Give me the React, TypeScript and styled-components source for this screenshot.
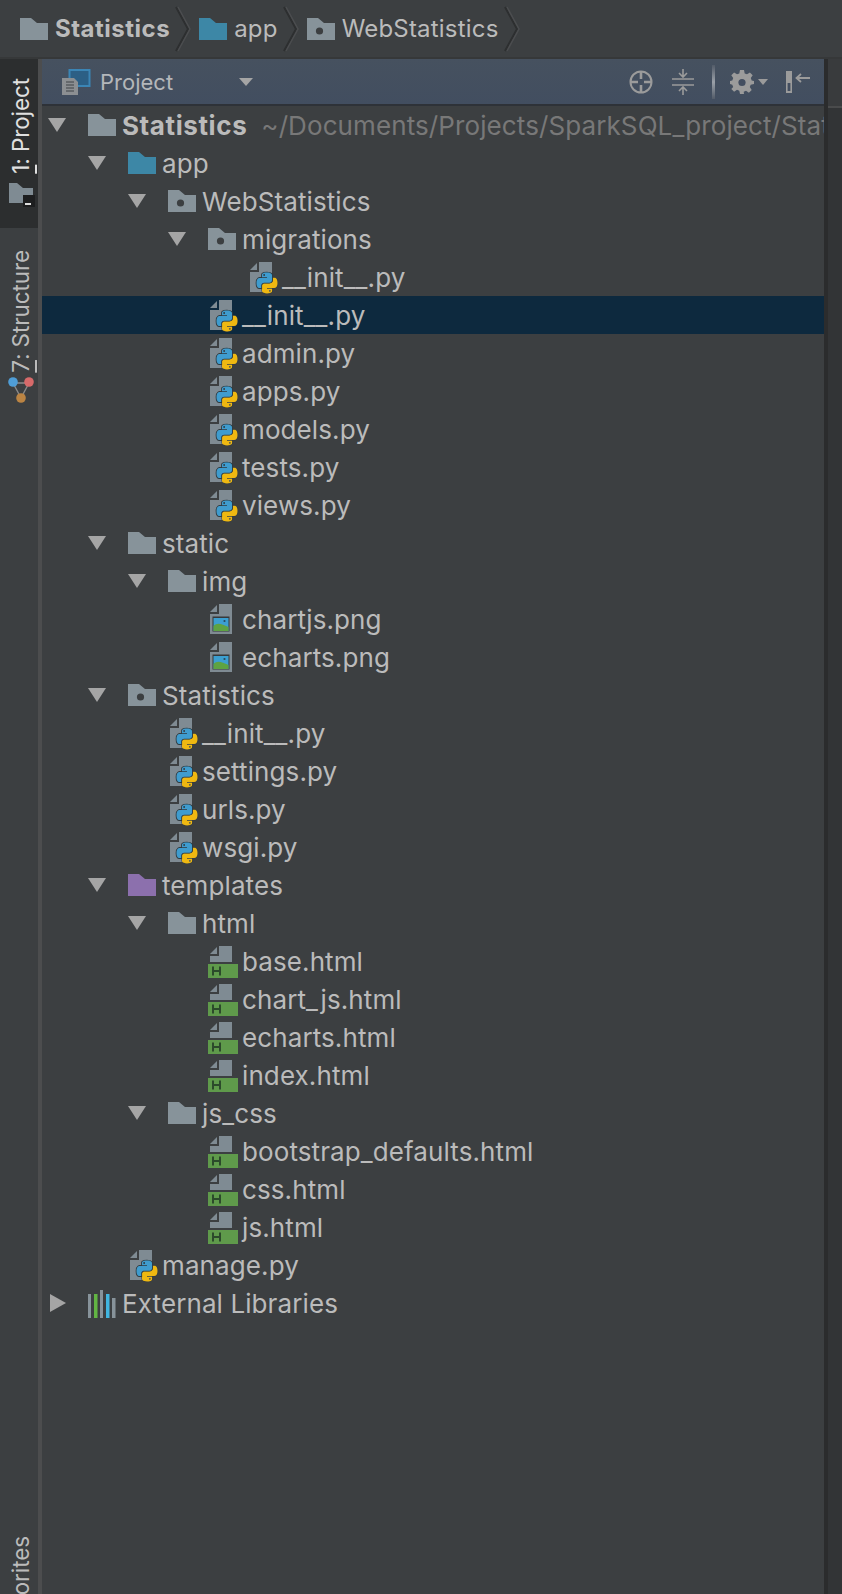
import React from 'react';
import styled, { createGlobalStyle } from 'styled-components';

const uiFont = `Inter, "Liberation Sans", sans-serif`;

const GlobalStyle = createGlobalStyle`
    html, body {
        margin: 0;
        padding: 0;
        background: #3c3f41;
    }
    * {
        box-sizing: border-box;
    }
`;

const Page = styled.div`
    width: 842px;
    height: 1594px;
    overflow: hidden;
    background: #3c3f41;
    color: #bbbbbb;
    font-family: ${uiFont};
    display: flex;
    flex-direction: column;
`;

/* ---------- breadcrumb bar ---------- */

const Breadcrumbs = styled.div`
    height: 59px;
    flex: none;
    display: flex;
    align-items: center;
    padding-left: 20px;
    background: #3c3f41;
    border-bottom: 2px solid #363839;
`;

const Crumb = styled.div`
    display: flex;
    align-items: center;
    gap: 7px;
    margin-right: 3px;
`;

const CrumbText = styled.span<{ $bold?: boolean }>`
    font-size: 24px;
    letter-spacing: ${p => (p.$bold ? '0.5px' : '0.2px')};
    font-weight: ${p => (p.$bold ? 700 : 400)};
    line-height: 58px;
`;

const ChevronSvg = styled.svg`
    display: block;
    margin-left: 2px;
    margin-right: 8px;
`;

/* ---------- main area ---------- */

const Body = styled.div`
    flex: 1;
    display: flex;
    min-height: 0;
`;

const ToolStrip = styled.div`
    width: 42px;
    flex: none;
    display: flex;
    flex-direction: column;
    overflow: hidden;
    border-right: 4px solid #4c4d4e;
`;

const ToolTab = styled.div<{ $active?: boolean }>`
    display: flex;
    flex-direction: column;
    align-items: center;
    padding-left: 4px;
    background: ${p => (p.$active ? '#2c2e2f' : 'transparent')};
    color: ${p => (p.$active ? '#e0e0e0' : '#bbbbbb')};
    height: ${p => (p.$active ? '169px' : 'auto')};
    padding-top: ${p => (p.$active ? '19px' : '22px')};
`;

const FavoritesTab = styled(ToolTab)`
    margin-top: auto;
    margin-bottom: -38px;
    padding-top: 0;
`;

const ToolLabel = styled.span`
    writing-mode: vertical-rl;
    transform: rotate(180deg);
    font-size: 22.5px;
    line-height: 34px;
    white-space: nowrap;
    letter-spacing: -0.1px;

    u {
        text-underline-offset: 3px;
    }
`;

const ToolIcon = styled.svg<{ $gap: number }>`
    display: block;
    overflow: visible;
    margin-top: ${p => p.$gap}px;
`;

const Panel = styled.div`
    flex: 1;
    min-width: 0;
    display: flex;
    flex-direction: column;
`;

const PanelHeader = styled.div`
    height: 47px;
    flex: none;
    display: flex;
    align-items: center;
    padding-left: 20px;
    background: linear-gradient(#46515f, #424e60);
    border-bottom: 2px solid #2e3238;
`;

const PanelTitle = styled.span`
    font-size: 22px;
    letter-spacing: 0;
    color: #b4b7ba;
    margin-left: 8px;
    width: 139px;
`;

const HeaderTools = styled.div`
    margin-left: auto;
    display: flex;
    align-items: center;
    padding-right: 14px;
`;

const HeaderIcon = styled.svg<{ $gap?: number }>`
    display: block;
    margin-left: ${p => p.$gap ?? 0}px;
`;

const HeaderRule = styled.div`
    width: 3px;
    height: 34px;
    margin-left: 18px;
    background: linear-gradient(#525b68, #9aa0a8 50%, #525b68);
`;

const Gutter = styled.div`
    width: 18px;
    flex: none;
    background: #323436;
    border-left: 4px solid #2b2c2d;
`;

const GutterHead = styled.div`
    height: 49px;
    background: #393b3d;
    border-bottom: 2px solid #4a4b4c;
`;

/* ---------- tree ---------- */

const Tree = styled.div`
    flex: 1;
    overflow: hidden;
`;

const Row = styled.div<{ $level: number; $selected?: boolean }>`
    height: 38px;
    display: flex;
    align-items: center;
    white-space: nowrap;
    overflow: hidden;
    padding-left: ${p => 6 + p.$level * 40}px;
    background: ${p => (p.$selected ? '#0d293e' : 'transparent')};
`;

const ArrowSlot = styled.div`
    width: 40px;
    flex: none;
    display: flex;
    align-items: center;
`;

const IconSlot = styled.div`
    width: 34px;
    flex: none;
    height: 38px;
    display: flex;
    align-items: flex-start;
`;

const RowLabel = styled.span<{ $bold?: boolean }>`
    font-size: 26px;
    letter-spacing: ${p => (p.$bold ? '0.6px' : '0.1px')};
    font-weight: ${p => (p.$bold ? 700 : 400)};
`;

const RowPath = styled.span`
    font-size: 26px;
    letter-spacing: 0.1px;
    color: #787878;
    margin-left: 14px;
`;

/* ---------- icons ---------- */

type FolderKind = 'plain' | 'source' | 'package' | 'template';

const folderColor: Record<FolderKind, string> = {
    plain: '#87939a',
    package: '#87939a',
    source: '#3d87a6',
    template: '#8c70ad'
};

const FolderSvg = styled.svg<{ $top: number }>`
    display: block;
    margin-top: ${p => p.$top}px;
`;

const FolderIcon = ({ kind, top = 8 }: { kind: FolderKind; top?: number }) => (
    <FolderSvg $top={top} width="28" height="22" viewBox="0 0 28 22">
        <path d="M0 0h11l6 5h11v17H0z" fill={folderColor[kind]} />
        {kind === 'package' && <circle cx="12.5" cy="13" r="3.6" fill="#3c3f41" />}
    </FolderSvg>
);

const PythonMark = () => (
    <g transform="translate(6.5 10.5) scale(0.19)">
        <path
            d="M55.7 110c28 0 26.3-12.2 26.3-12.2l0-12.6H55.3v-3.8h37.3S110.6 83.5 110.6 55.2c0-28.2-15.6-27.2-15.6-27.2h-9.3v13.1s.5 15.6-15.4 15.6H43.8s-14.9-.2-14.9 14.4v24.2S26.7 110 55.7 110zM70.4 101.5a4.8 4.8 0 1 1 0-9.6 4.8 4.8 0 0 1 0 9.6z"
            fill="#efb811"
            stroke="#2f3a40"
            strokeWidth="5"
            paintOrder="stroke"
        />
        <path
            d="M54.9 0C26.9 0 28.6 12.2 28.6 12.2l0 12.6h26.7v3.8H18S0 26.5 0 54.8c0 28.2 15.6 27.2 15.6 27.2h9.3V68.9s-.5-15.6 15.4-15.6h26.5s14.9.2 14.9-14.4V14.7S83.9 0 54.9 0zM40.2 8.5a4.8 4.8 0 1 1 0 9.6 4.8 4.8 0 0 1 0-9.6z"
            fill="#3f9cce"
            stroke="#2f3a40"
            strokeWidth="9"
            paintOrder="stroke"
        />
    </g>
);

const FileSvg = styled.svg`
    display: block;
    overflow: visible;
    margin-top: 4px;
    margin-left: 2px;
`;

const PythonIcon = () => (
    <FileSvg width="30" height="33" viewBox="0 0 30 33">
        <path d="M0 8 7 1v7z" fill="#7f8b93" />
        <path d="M9 0h13v30H0V10h9z" fill="#7f8b93" />
        <PythonMark />
    </FileSvg>
);

const ImageIcon = () => (
    <FileSvg width="22" height="30" viewBox="0 0 22 30">
        <path d="M0 8 7 1v7z" fill="#7f8b93" />
        <path d="M9 0h13v30H0V10h9z" fill="#7f8b93" />
        <rect x="2.5" y="12.5" width="17" height="15" fill="#37393b" />
        <rect x="3.5" y="14" width="15" height="13" fill="#3c9fd0" />
        <path d="M3.5 22c4-4 8-2 15 1v4h-15z" fill="#5ea342" />
        <circle cx="14.5" cy="17" r="1.1" fill="#27495c" />
    </FileSvg>
);

const HtmlFileSvg = styled.svg`
    display: block;
    margin-top: 4px;
`;

const HtmlIcon = () => (
    <HtmlFileSvg width="30" height="32" viewBox="0 0 30 32">
        <path d="M2 8 9 1v7z" fill="#7f8b93" />
        <path d="M11 0h13v16H2v-6h9z" fill="#7f8b93" />
        <rect x="0" y="18" width="30" height="14" fill="#5f9a4b" />
        <path d="M5 20.5v9M12 20.5v9M5 25h7" stroke="#2c4a2b" strokeWidth="2" fill="none" />
    </HtmlFileSvg>
);

const LibrariesIcon = () => (
    <FolderSvg $top={6} width="28" height="28" viewBox="0 0 28 28">
        <rect x="0" y="4" width="3" height="24" fill="#87939a" />
        <rect x="6" y="4" width="3.5" height="24" fill="#62b543" />
        <rect x="12" y="0" width="3" height="28" fill="#87939a" />
        <rect x="18" y="4" width="3.5" height="24" fill="#40b6e0" />
        <rect x="24" y="8" width="3.5" height="20" fill="#87939a" />
    </FolderSvg>
);

const ClosedArrow = styled.svg`
    display: block;
    margin-left: 2px;
`;

const OpenArrow = styled.svg`
    display: block;
`;

const Arrow = ({ open }: { open: boolean }) =>
    open ? (
        <OpenArrow width="18" height="14" viewBox="0 0 18 14">
            <path d="M0 0h18L9 14z" fill="#a5a5a5" />
        </OpenArrow>
    ) : (
        <ClosedArrow width="16" height="18" viewBox="0 0 16 18">
            <path d="M0 0l16 9-16 9z" fill="#a5a5a5" />
        </ClosedArrow>
    );

const Chevron = () => (
    <ChevronSvg width="16" height="46" viewBox="0 0 16 46">
        <path d="M1 1l12 22L1 45" fill="none" stroke="#2d2f30" strokeWidth="2" />
        <path d="M3 1l12 22L3 45" fill="none" stroke="#4b4d4f" strokeWidth="1.5" />
    </ChevronSvg>
);

const ProjectViewSvg = styled.svg`
    display: block;
`;

const ProjectViewIcon = () => (
    <ProjectViewSvg width="30" height="26" viewBox="0 0 30 26">
        <rect x="7.5" y="1" width="20" height="16" fill="#2c5f85" stroke="#3b85b5" strokeWidth="2" />
        <path d="M0 9h12l4 4v13H0z" fill="#8c8f92" />
        <path d="M4 13h8M4 16h8M4 19h8M4 22h8" stroke="#3e4246" strokeWidth="1" />
    </ProjectViewSvg>
);

const LocateIcon = () => (
    <HeaderIcon width="24" height="24" viewBox="0 0 24 24">
        <circle cx="12" cy="12" r="10.5" fill="none" stroke="#9b9b9b" strokeWidth="2" />
        <path d="M12 2v7M12 15v7M2 12h7M15 12h7" stroke="#9b9b9b" strokeWidth="2.6" />
    </HeaderIcon>
);

const CollapseIcon = () => (
    <HeaderIcon $gap={19} width="22" height="28" viewBox="0 0 22 28">
        <path d="M0 11h22M0 17h22" stroke="#9b9b9b" strokeWidth="1.6" />
        <path d="M11 1v7M7 5l4 4 4-4" fill="none" stroke="#9b9b9b" strokeWidth="1.6" />
        <path d="M11 27v-7M7 23l4-4 4 4" fill="none" stroke="#9b9b9b" strokeWidth="1.6" />
    </HeaderIcon>
);

const GearIcon = () => (
    <HeaderIcon $gap={15} width="24" height="24" viewBox="0 0 24 24">
        <path
            d="M10 0h4l.7 3.4 2.3.9 2.9-1.9 2.8 2.8-1.9 2.9.9 2.3L24 11v3l-3.3.8-.9 2.2 1.9 2.9-2.8 2.8-2.9-1.9-2.3.9L14 24h-4l-.7-3.3-2.3-.9-2.9 1.9-2.8-2.8L3.2 17l-.9-2.2L0 14v-3l2.3-.6.9-2.3-1.9-2.9 2.8-2.8 2.9 1.9 2.3-.9z"
            fill="#9b9b9b"
        />
        <circle cx="12" cy="12.5" r="3.6" fill="#434e60" />
    </HeaderIcon>
);

const MiniCaret = () => (
    <HeaderIcon $gap={4} width="10" height="6" viewBox="0 0 10 6">
        <path d="M0 0h10L5 6z" fill="#9b9b9b" />
    </HeaderIcon>
);

const HideIcon = () => (
    <HeaderIcon $gap={18} width="24" height="22" viewBox="0 0 24 22">
        <rect x="0" y="0" width="6" height="22" fill="#9b9b9b" />
        <rect x="1.6" y="12" width="2.8" height="8" fill="#434e60" />
        <path d="M24 7H11M15 3l-4.5 4 4.5 4" fill="none" stroke="#9b9b9b" strokeWidth="1.8" />
    </HeaderIcon>
);

const HeaderCaret = styled.svg`
    display: block;
`;

/* ---------- data ---------- */

type Node = {
    name: string;
    level: number;
    kind: FolderKind | 'py' | 'img' | 'html' | 'libs';
    open?: boolean;
    path?: string;
    bold?: boolean;
    selected?: boolean;
};

const tree: Node[] = [
    { name: 'Statistics', level: 0, kind: 'plain', open: true, bold: true, path: '~/Documents/Projects/SparkSQL_project/Statistics' },
    { name: 'app', level: 1, kind: 'source', open: true },
    { name: 'WebStatistics', level: 2, kind: 'package', open: true },
    { name: 'migrations', level: 3, kind: 'package', open: true },
    { name: '__init__.py', level: 4, kind: 'py' },
    { name: '__init__.py', level: 3, kind: 'py', selected: true },
    { name: 'admin.py', level: 3, kind: 'py' },
    { name: 'apps.py', level: 3, kind: 'py' },
    { name: 'models.py', level: 3, kind: 'py' },
    { name: 'tests.py', level: 3, kind: 'py' },
    { name: 'views.py', level: 3, kind: 'py' },
    { name: 'static', level: 1, kind: 'plain', open: true },
    { name: 'img', level: 2, kind: 'plain', open: true },
    { name: 'chartjs.png', level: 3, kind: 'img' },
    { name: 'echarts.png', level: 3, kind: 'img' },
    { name: 'Statistics', level: 1, kind: 'package', open: true },
    { name: '__init__.py', level: 2, kind: 'py' },
    { name: 'settings.py', level: 2, kind: 'py' },
    { name: 'urls.py', level: 2, kind: 'py' },
    { name: 'wsgi.py', level: 2, kind: 'py' },
    { name: 'templates', level: 1, kind: 'template', open: true },
    { name: 'html', level: 2, kind: 'plain', open: true },
    { name: 'base.html', level: 3, kind: 'html' },
    { name: 'chart_js.html', level: 3, kind: 'html' },
    { name: 'echarts.html', level: 3, kind: 'html' },
    { name: 'index.html', level: 3, kind: 'html' },
    { name: 'js_css', level: 2, kind: 'plain', open: true },
    { name: 'bootstrap_defaults.html', level: 3, kind: 'html' },
    { name: 'css.html', level: 3, kind: 'html' },
    { name: 'js.html', level: 3, kind: 'html' },
    { name: 'manage.py', level: 1, kind: 'py' },
    { name: 'External Libraries', level: 0, kind: 'libs', open: false }
];

const NodeIcon = ({ kind }: { kind: Node['kind'] }) => {
    if (kind === 'py') return <PythonIcon />;
    if (kind === 'img') return <ImageIcon />;
    if (kind === 'html') return <HtmlIcon />;
    if (kind === 'libs') return <LibrariesIcon />;
    return <FolderIcon kind={kind} />;
};

const App = () => {
    return (
        <Page>
            <GlobalStyle />
            <Breadcrumbs>
                <Crumb>
                    <FolderIcon kind="plain" top={0} />
                    <CrumbText $bold>Statistics</CrumbText>
                </Crumb>
                <Chevron />
                <Crumb>
                    <FolderIcon kind="source" top={0} />
                    <CrumbText>app</CrumbText>
                </Crumb>
                <Chevron />
                <Crumb>
                    <FolderIcon kind="package" top={0} />
                    <CrumbText>WebStatistics</CrumbText>
                </Crumb>
                <Chevron />
            </Breadcrumbs>
            <Body>
                <ToolStrip>
                    <ToolTab $active>
                        <ToolLabel>
                            <u>1</u>: Project
                        </ToolLabel>
                        <ToolIcon $gap={9} width="24" height="20" viewBox="0 0 24 20">
                            <path d="M0 0h8l6 5h10v15H0z" fill="#7f8b93" />
                            <rect x="14" y="12" width="12" height="12" fill="#1d1e1f" />
                            <rect x="16" y="20" width="6" height="2" fill="#dddddd" />
                        </ToolIcon>
                    </ToolTab>
                    <ToolTab>
                        <ToolLabel>
                            <u>7</u>: Structure
                        </ToolLabel>
                        <ToolIcon $gap={4} width="26" height="26" viewBox="0 0 26 26">
                            <path d="M5 6h16M5 6l8 15M21 6l-8 15" stroke="#8a8a8a" strokeWidth="1.4" fill="none" />
                            <circle cx="5" cy="5" r="4.8" fill="#4f9dd6" />
                            <circle cx="21" cy="5" r="4.8" fill="#d76a6a" />
                            <circle cx="13" cy="21" r="4.8" fill="#bb8443" />
                        </ToolIcon>
                    </ToolTab>
                    <FavoritesTab>
                        <ToolLabel>Favorites</ToolLabel>
                    </FavoritesTab>
                </ToolStrip>
                <Panel>
                    <PanelHeader>
                        <ProjectViewIcon />
                        <PanelTitle>Project</PanelTitle>
                        <HeaderCaret width="14" height="8" viewBox="0 0 14 8">
                            <path d="M0 0h14L7 8z" fill="#a5a5a5" />
                        </HeaderCaret>
                        <HeaderTools>
                            <LocateIcon />
                            <CollapseIcon />
                            <HeaderRule />
                            <GearIcon />
                            <MiniCaret />
                            <HideIcon />
                        </HeaderTools>
                    </PanelHeader>
                    <Tree>
                        {tree.map((node, i) => (
                            <Row key={i} $level={node.level} $selected={node.selected}>
                                <ArrowSlot>{node.open !== undefined && <Arrow open={node.open} />}</ArrowSlot>
                                <IconSlot>
                                    <NodeIcon kind={node.kind} />
                                </IconSlot>
                                <RowLabel $bold={node.bold}>{node.name}</RowLabel>
                                {node.path && <RowPath>{node.path}</RowPath>}
                            </Row>
                        ))}
                    </Tree>
                </Panel>
                <Gutter>
                    <GutterHead />
                </Gutter>
            </Body>
        </Page>
    );
};

export default App;
